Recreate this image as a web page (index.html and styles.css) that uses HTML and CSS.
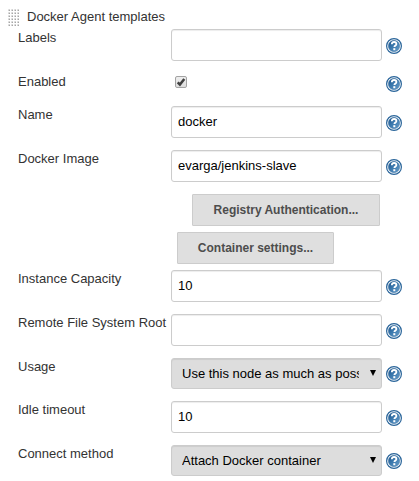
FILE: index.html
```
<!DOCTYPE html>
<html lang="en">
<head>
<meta charset="utf-8">
<title>Docker Agent templates</title>
<link rel="stylesheet" href="styles.css">
</head>
<body>
<svg class="defs" width="0" height="0" aria-hidden="true">
  <defs>
    <linearGradient id="disc" x1="0" y1="0" x2="1" y2="1">
      <stop offset="0" stop-color="#1b5288"/>
      <stop offset="0.45" stop-color="#3b78ad"/>
      <stop offset="1" stop-color="#6a9fca"/>
    </linearGradient>
    <symbol id="help" viewBox="0 0 16 16">
      <circle cx="8" cy="8" r="7.4" fill="#fff" stroke="#2a659a" stroke-width="1.2"/>
      <circle cx="8" cy="8" r="5.7" fill="url(#disc)" stroke="#2a659a" stroke-width="0.4"/>
      <path d="M5.8 6.3C5.9 4.7 6.9 4 8.1 4c1.4 0 2.3.8 2.3 2 0 1.6-2 1.5-2 3.1" fill="none" stroke="#fff" stroke-width="1.8"/>
      <rect x="7.3" y="10.2" width="2" height="2" fill="#fff"/>
    </symbol>
    <pattern id="dots" width="3" height="3" patternUnits="userSpaceOnUse">
      <rect width="2" height="2" fill="#d4d4d4"/>
      <rect x="1" y="1" width="1" height="1" fill="#a6a6a6"/>
      <rect width="1" height="1" fill="#e4e4e4"/>
    </pattern>
  </defs>
</svg>
<main class="form">
  <header class="heading">
    <svg class="grip" width="11" height="17"><rect width="11" height="17" fill="url(#dots)"/></svg>
    <span>Docker Agent templates</span>
  </header>
  <div class="row"><label>Labels</label><input type="text"><svg class="help"><use href="#help"/></svg></div>
  <div class="row row-check">
    <label>Enabled</label>
    <div class="setting"><span class="check" role="checkbox" aria-checked="true"><svg width="10" height="10" viewBox="0 0 10 10"><path d="M1.7 5.3L3.9 7.5L8.3 1.9" fill="none" stroke="#404040" stroke-width="2.5"/></svg></span></div>
    <svg class="help"><use href="#help"/></svg>
  </div>
  <div class="row"><label>Name</label><input type="text" value="docker"><svg class="help"><use href="#help"/></svg></div>
  <div class="row"><label>Docker Image</label><input type="text" value="evarga/jenkins-slave"><svg class="help"><use href="#help"/></svg></div>
  <div class="actions">
    <button class="registry" type="button">Registry Authentication...</button>
    <button class="container" type="button">Container settings...</button>
  </div>
  <div class="row"><label>Instance Capacity</label><input type="text" value="10"><svg class="help"><use href="#help"/></svg></div>
  <div class="row"><label>Remote File System Root</label><input type="text"><svg class="help"><use href="#help"/></svg></div>
  <div class="row row-select">
    <label>Usage</label>
    <div class="select"><span class="value">Use this node as much as possible</span><svg width="6" height="6"><path d="M0 0H6L3 6Z"/></svg></div>
    <svg class="help"><use href="#help"/></svg>
  </div>
  <div class="row"><label>Idle timeout</label><input type="text" value="10"><svg class="help"><use href="#help"/></svg></div>
  <div class="row row-select">
    <label>Connect method</label>
    <div class="select"><span class="value">Attach Docker container</span><svg width="6" height="6"><path d="M0 0H6L3 6Z"/></svg></div>
    <svg class="help"><use href="#help"/></svg>
  </div>
</main>
</body>
</html>
```
FILE: styles.css
```
* { box-sizing: border-box; }

body {
  margin: 0;
  background: #fff;
  color: #333;
  font: 13px/18px "Liberation Sans", Arial, sans-serif;
  overflow: hidden;
}

.defs { display: block; }

.form { padding: 8px 0 0 8px; }

.heading {
  display: flex;
  height: 21px;
  gap: 8px;
}

.grip { margin-top: 1px; }

.row {
  display: grid;
  grid-template-columns: 153px 211px 20px;
  align-items: start;
  height: 44px;
  padding-left: 10px;
}

.row label { white-space: nowrap; }

.row .help {
  width: 16px;
  height: 16px;
  margin: 9px 0 0 4px;
}

.row-check { height: 33px; }
.row-check .help { margin-top: 3px; }
.row-select { height: 43px; }
.row-select .help { margin-top: 8px; }

input {
  width: 211px;
  height: 32px;
  margin: 0;
  padding: 5px 6px 7px;
  border: 1px solid #ccc;
  border-radius: 3px;
  background: #fff;
  box-shadow: inset 0 1px 1px rgba(0, 0, 0, 0.075);
  color: #000;
  font: 13px "Liberation Sans", Arial, sans-serif;
}

.setting { padding: 3px 0 0 4px; }

.check {
  display: block;
  width: 12px;
  height: 12px;
  border: 1px solid #a3a3a3;
  border-radius: 2px;
  background: linear-gradient(#eee, #dedede);
}

.check svg { display: block; }

.actions {
  display: flex;
  flex-direction: column;
  align-items: flex-start;
  gap: 6px;
  height: 76px;
}

button {
  height: 32px;
  margin: 0;
  padding: 0;
  border: 1px solid #ccc;
  border-radius: 1px;
  background: #dfdfdf;
  color: #4d4d4d;
  font: bold 12px "Liberation Sans", Arial, sans-serif;
}

.registry { width: 188px; margin-left: 184px; }
.container { width: 157px; margin-left: 169px; }

.select {
  display: flex;
  align-items: center;
  justify-content: space-between;
  height: 31px;
  padding: 0 5px 0 10px;
  border: 1px solid #ccc;
  border-radius: 3px;
  background: #ddd;
  box-shadow: inset 0 1px 1px rgba(0, 0, 0, 0.075);
  color: #000;
}

.value {
  width: 177px;
  overflow: hidden;
  white-space: nowrap;
}

.select svg { margin-top: -1px; }
```
